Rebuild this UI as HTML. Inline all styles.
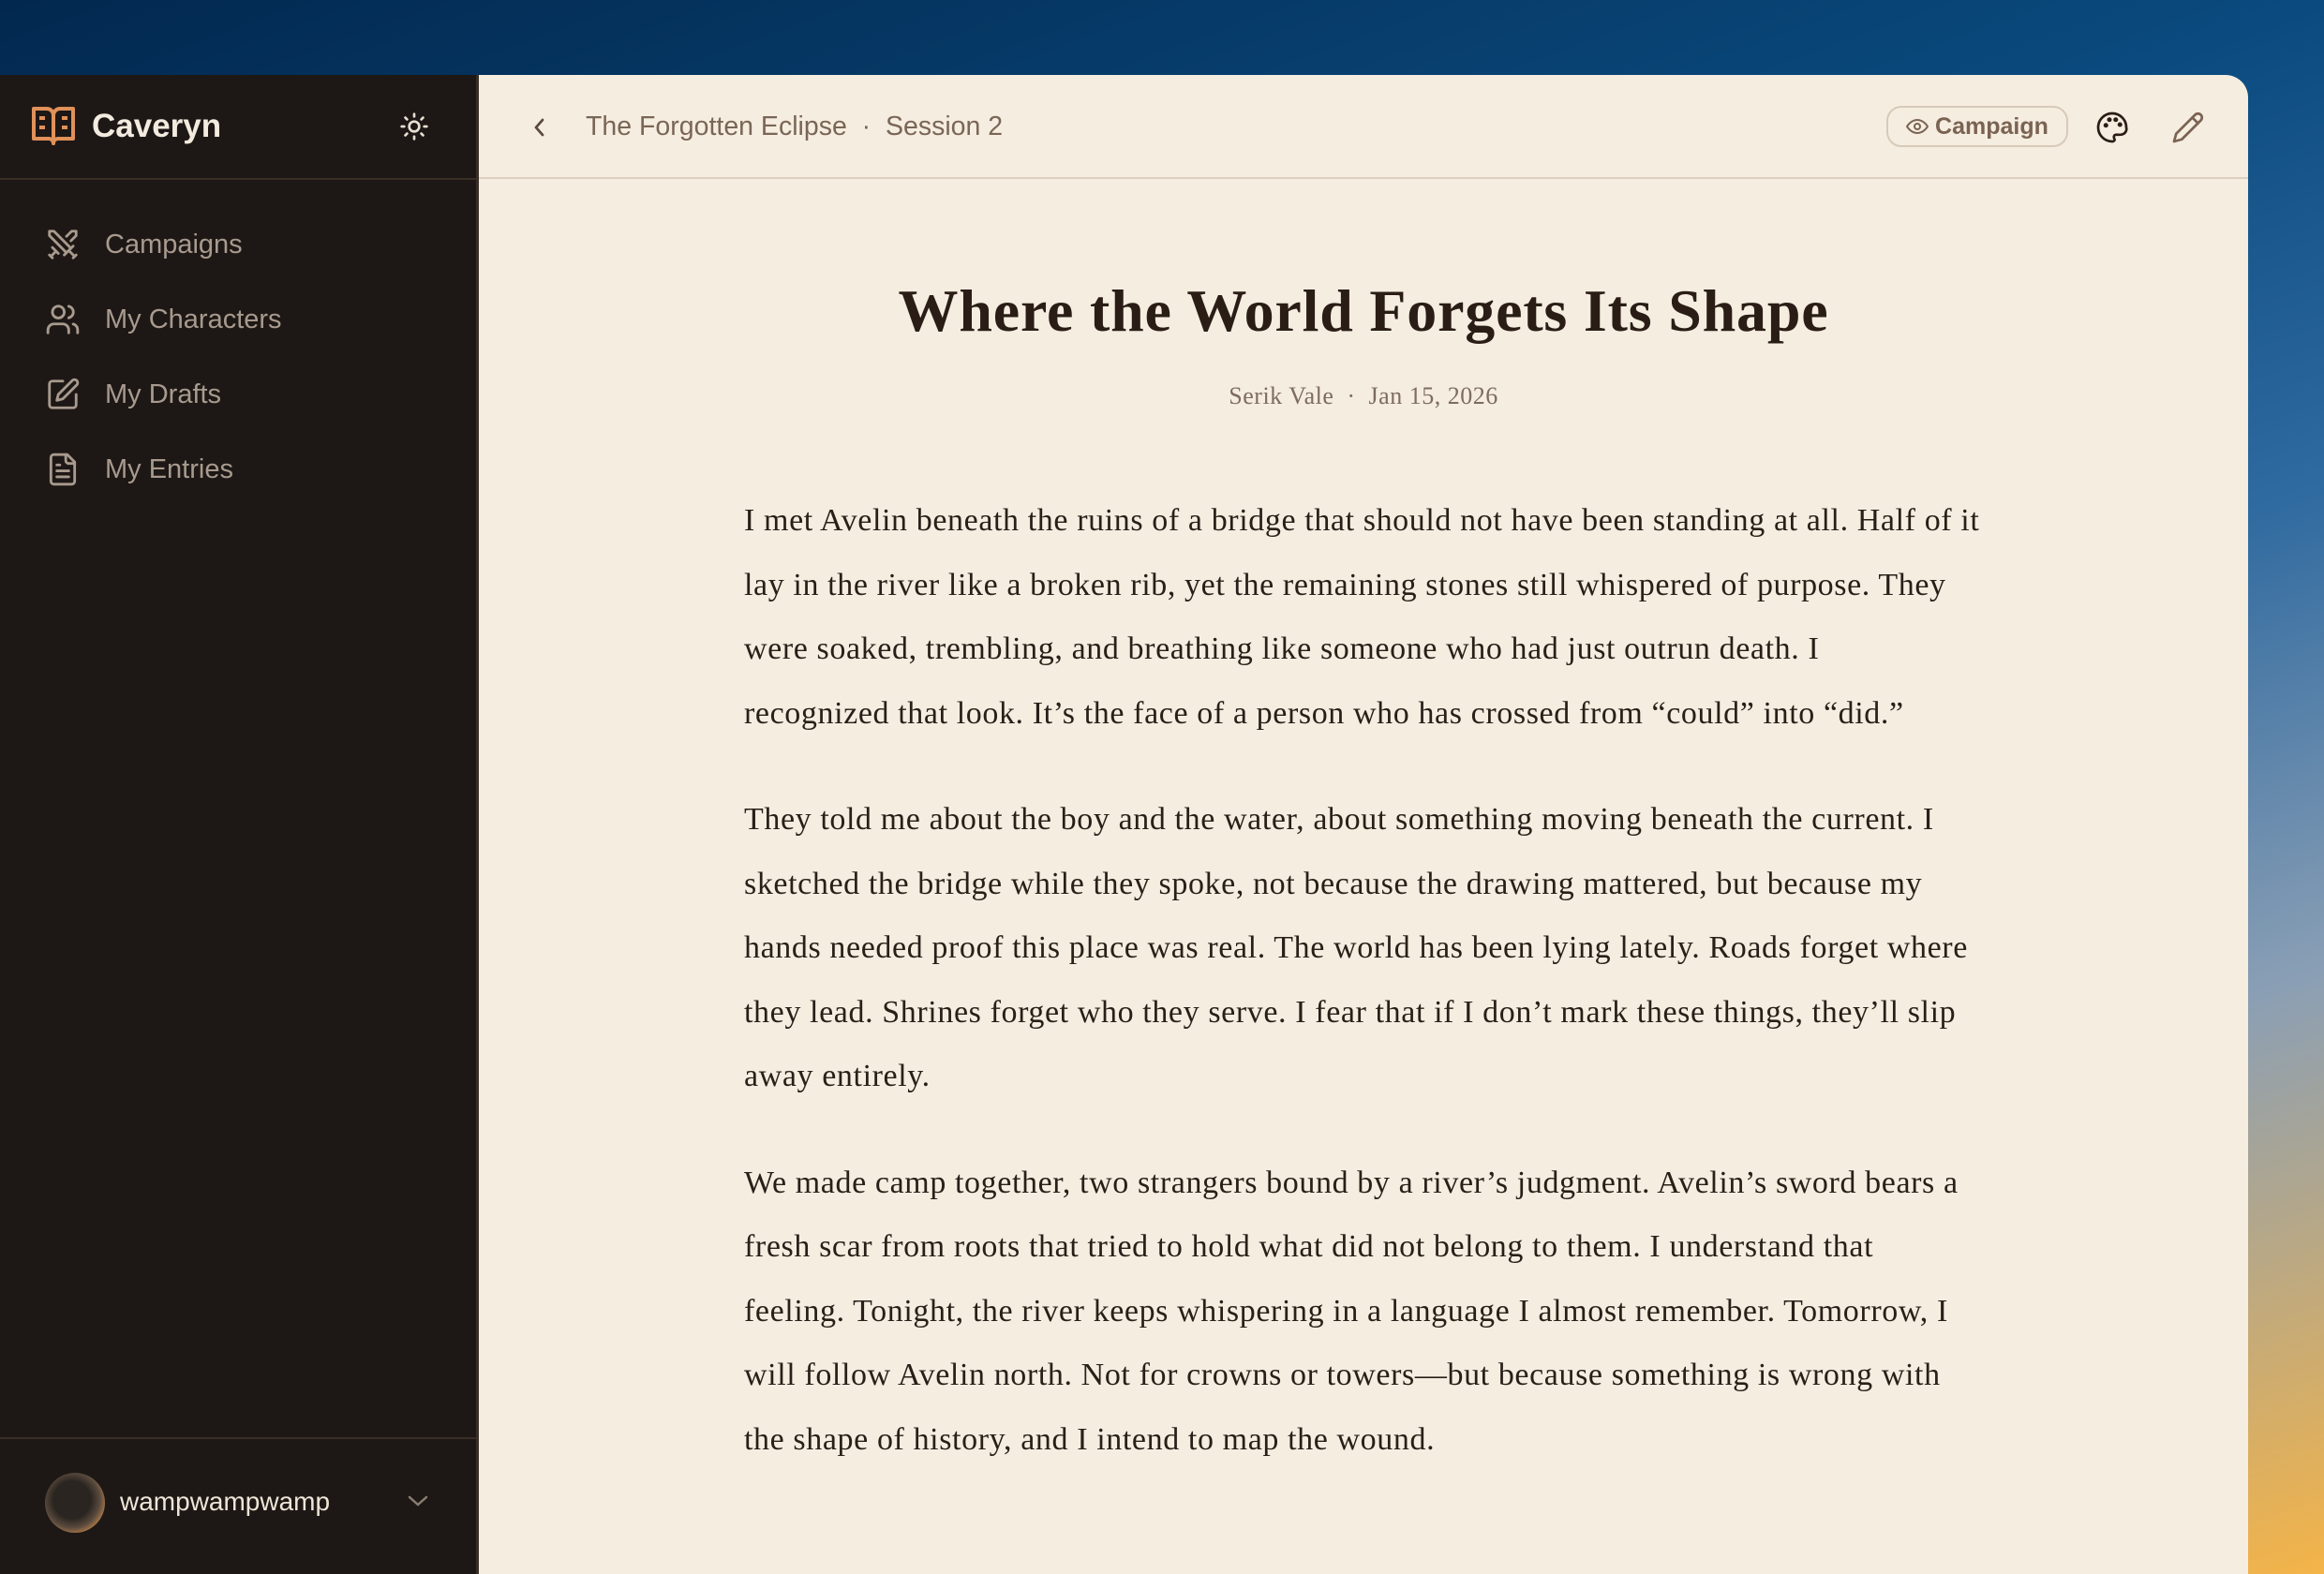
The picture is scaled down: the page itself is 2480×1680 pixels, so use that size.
<!DOCTYPE html>
<html><head><meta charset="utf-8"><style>
*{margin:0;padding:0;box-sizing:border-box}
html,body{width:2480px;height:1680px;overflow:hidden}
body{background:linear-gradient(160deg,#02284f 0%,#0a4a7e 35%,#2f6aa0 55%,#8a9fb5 75%,#f4b448 100%);font-family:"Liberation Sans",sans-serif;position:relative}
.win{position:absolute;left:0;top:80px;width:2399px;height:1600px;background:#f5ede0;border-top-right-radius:24px;overflow:hidden}
.side{position:absolute;left:0;top:0;width:511px;height:1600px;background:#1d1815;border-right:3px solid #3a2f27}
.brand{position:absolute;left:34px;top:30px;height:50px;display:flex;align-items:center}
.brand span{color:#f3ebdf;font-weight:bold;font-size:35px;margin-left:18px}
.sep{position:absolute;left:0;width:511px;height:2px;background:#3a2f27}
.nav{position:absolute;left:48px;display:flex;align-items:center;color:#a89a8e;font-size:29px}
.nav svg{margin-right:26px}
.main{position:absolute;left:511px;top:0;right:0;height:1600px}
.hdr{position:absolute;left:0;right:0;top:0;height:111px;border-bottom:2px solid #dccfbf}
.crumb{position:absolute;left:114px;top:39px;font-size:28.5px;color:#7a6656;white-space:nowrap}
.btn{position:absolute;left:1502px;top:33px;width:194px;height:44px;border:2px solid #d8cab9;border-radius:16px;display:flex;align-items:center;justify-content:center;color:#7a6352;font-weight:bold;font-size:25px}
h1{position:absolute;left:0;width:1888px;top:212px;text-align:center;font-family:"Liberation Serif",serif;font-weight:bold;font-size:64px;color:#2a1d16;letter-spacing:0.8px;line-height:80px}
.meta{position:absolute;left:0;width:1888px;top:328px;text-align:center;font-family:"Liberation Serif",serif;font-size:26px;color:#7d6c60;letter-spacing:0.5px}
.body{position:absolute;left:283px;top:442px;font-family:"Liberation Serif",serif;font-size:34px;color:#2a1f18;line-height:68.5px;letter-spacing:0.6px}
.body div{white-space:nowrap}
.body .para{margin-bottom:45px}
</style></head><body>
<div class="win">
 <div class="side">
  <div class="brand">
   <svg width="46" height="44" viewBox="0 0 46 44" fill="none" stroke="#e0915a" stroke-width="4" stroke-linejoin="round"><path d="M2 3h14a7 7 0 0 1 7 7v30a5 5 0 0 0-5-5H2z"/><path d="M44 3H30a7 7 0 0 0-7 7v30a5 5 0 0 1 5-5h16z"/><path d="M8 13h6M8 23h6M32 13h6M32 23h6"/></svg>
   <span>Caveryn</span>
  </div>
  <svg style="position:absolute;left:426px;top:39px" width="32" height="32" viewBox="0 0 24 24" fill="none" stroke="#e8dfd3" stroke-width="2" stroke-linecap="round"><circle cx="12" cy="12" r="4"/><path d="M12 2v2M12 20v2M4.9 4.9l1.4 1.4M17.7 17.7l1.4 1.4M2 12h2M20 12h2M4.9 19.1l1.4-1.4M17.7 6.3l1.4-1.4"/></svg>
  <div class="sep" style="top:110px"></div>
  <div class="nav" style="top:162px"><svg width="38" height="38" viewBox="0 0 24 24" fill="none" stroke="#a89a8e" stroke-width="1.8" stroke-linecap="round" stroke-linejoin="round"><path d="M14.5 17.5L3 6V3h3l11.5 11.5M13 19l6-6M16 16l4 4M19 21l2-2"/><path d="M14.5 6.5L18 3h3v3l-3.5 3.5M5 14l4 4M7 17l-3 3M3 19l2 2"/></svg>Campaigns</div>
  <div class="nav" style="top:242px"><svg width="38" height="38" viewBox="0 0 24 24" fill="none" stroke="#a89a8e" stroke-width="1.8" stroke-linecap="round"><circle cx="9" cy="7" r="4"/><path d="M2 21v-2a4 4 0 0 1 4-4h6a4 4 0 0 1 4 4v2M16 3.1a4 4 0 0 1 0 7.8M22 21v-2a4 4 0 0 0-3-3.9"/></svg>My Characters</div>
  <div class="nav" style="top:322px"><svg width="38" height="38" viewBox="0 0 24 24" fill="none" stroke="#a89a8e" stroke-width="1.8" stroke-linecap="round" stroke-linejoin="round"><path d="M12 3H5a2 2 0 0 0-2 2v14a2 2 0 0 0 2 2h14a2 2 0 0 0 2-2v-7"/><path d="M18.4 2.6a2.1 2.1 0 0 1 3 3L12 15l-4 1 1-4z"/></svg>My Drafts</div>
  <div class="nav" style="top:402px"><svg width="38" height="38" viewBox="0 0 24 24" fill="none" stroke="#a89a8e" stroke-width="1.8" stroke-linecap="round" stroke-linejoin="round"><path d="M15 2H6a2 2 0 0 0-2 2v16a2 2 0 0 0 2 2h12a2 2 0 0 0 2-2V7z"/><path d="M14 2v4a2 2 0 0 0 2 2h4M10 9H8M16 13H8M16 17H8"/></svg>My Entries</div>
  <div class="sep" style="top:1454px"></div>
  <div style="position:absolute;left:48px;top:1492px;width:64px;height:64px;border-radius:50%;background:radial-gradient(circle at 45% 45%,#2a2520 0 40%,#5a4a3e 60%,#c88a4a 80%,#ddd 100%)"></div>
  <div style="position:absolute;left:128px;top:1507px;color:#eee5d8;font-size:28px">wampwampwamp</div>
  <svg style="position:absolute;left:432px;top:1512px" width="28" height="20" viewBox="0 0 28 20" fill="none" stroke="#8a7d72" stroke-width="2.5" stroke-linecap="round"><path d="M5 6l9 8 9-8"/></svg>
 </div>
 <div class="main">
  <div class="hdr">
   <svg style="position:absolute;left:55px;top:43px" width="20" height="26" viewBox="0 0 20 26" fill="none" stroke="#5a4a3e" stroke-width="2.8" stroke-linecap="round" stroke-linejoin="round"><path d="M13 5l-7 8 7 8"/></svg>
   <div class="crumb">The Forgotten Eclipse &nbsp;·&nbsp; Session 2</div>
   <div class="btn"><svg width="24" height="20" viewBox="0 0 24 20" fill="none" stroke="#7a6352" stroke-width="2"><path d="M1 10s4-7 11-7 11 7 11 7-4 7-11 7S1 10 1 10z"/><circle cx="12" cy="10" r="3"/></svg>&nbsp;Campaign</div>
   <svg style="position:absolute;left:1725px;top:38px" width="36" height="36" viewBox="0 0 24 24" fill="none" stroke="#2a1d16" stroke-width="1.8"><path d="M12 2a10 10 0 0 0 0 20c1.5 0 2-1 1.5-2s-.5-2.5 1-2.8c1.5-.2 3 .3 4.5-.2A4 4 0 0 0 22 12 10 10 0 0 0 12 2z"/><circle cx="7.5" cy="10.5" r=".8" fill="#2a1d16"/><circle cx="10" cy="6.5" r=".8" fill="#2a1d16"/><circle cx="14.5" cy="6.5" r=".8" fill="#2a1d16"/><circle cx="17.5" cy="10" r=".8" fill="#2a1d16"/></svg>
   <svg style="position:absolute;left:1806px;top:38px" width="36" height="36" viewBox="0 0 24 24" fill="none" stroke="#7a6352" stroke-width="1.8" stroke-linecap="round" stroke-linejoin="round"><path d="M17 3a2.8 2.8 0 1 1 4 4L7.5 20.5 2 22l1.5-5.5z"/><path d="M15 5l4 4"/></svg>
  </div>
  <h1>Where the World Forgets Its Shape</h1>
  <div class="meta">Serik Vale &nbsp;·&nbsp; Jan 15, 2026</div>
  <div class="body">
   <div class="para"><div>I met Avelin beneath the ruins of a bridge that should not have been standing at all. Half of it</div><div>lay in the river like a broken rib, yet the remaining stones still whispered of purpose. They</div><div>were soaked, trembling, and breathing like someone who had just outrun death. I</div><div>recognized that look. It’s the face of a person who has crossed from “could” into “did.”</div></div>
   <div class="para"><div>They told me about the boy and the water, about something moving beneath the current. I</div><div>sketched the bridge while they spoke, not because the drawing mattered, but because my</div><div>hands needed proof this place was real. The world has been lying lately. Roads forget where</div><div>they lead. Shrines forget who they serve. I fear that if I don’t mark these things, they’ll slip</div><div>away entirely.</div></div>
   <div class="para"><div>We made camp together, two strangers bound by a river’s judgment. Avelin’s sword bears a</div><div>fresh scar from roots that tried to hold what did not belong to them. I understand that</div><div>feeling. Tonight, the river keeps whispering in a language I almost remember. Tomorrow, I</div><div>will follow Avelin north. Not for crowns or towers—but because something is wrong with</div><div>the shape of history, and I intend to map the wound.</div></div>
  </div>
 </div>
</div>
</body></html>
